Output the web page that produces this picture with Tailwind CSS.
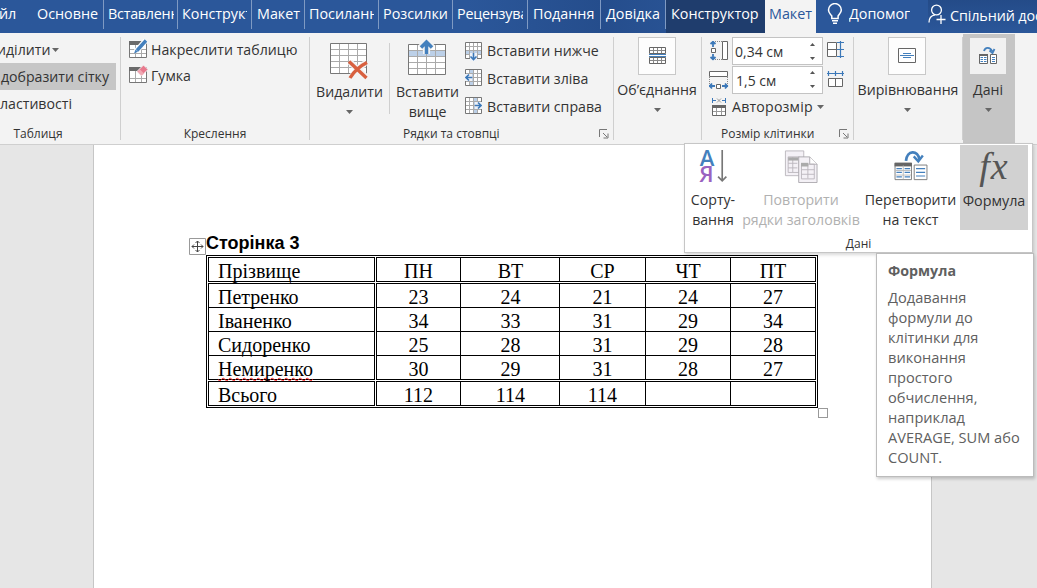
<!DOCTYPE html>
<html lang="uk">
<head>
<meta charset="utf-8">
<title>Word</title>
<script src="https://cdn.jsdelivr.net/npm/@tailwindcss/browser@4"></script>
</head>
<body class="relative w-[1037px] h-[588px] overflow-hidden bg-[#e6e6e6] font-['Open_Sans','Noto_Sans',sans-serif] text-[14.15px] leading-[20px] text-[#333] whitespace-nowrap">
<svg class="hidden">
  <symbol id="caret" viewBox="0 0 7 4"><path d="M0 0h7L3.500 4z" fill="#666"/></symbol>
  <symbol id="up" viewBox="0 0 5 3"><path d="M0 3h5L2.500 0z" fill="#555"/></symbol>
  <symbol id="down" viewBox="0 0 5 3"><path d="M0 0h5L2.500 3z" fill="#555"/></symbol>
  <symbol id="launch" viewBox="0 0 10 10"><path d="M.5 8V.5H8M4 4l4 4M9 4.500V9H4.500" fill="none" stroke="#777"/></symbol>
</svg>

<!-- Tabs -->
<nav class="flex h-[33px] bg-[#2b579a] bg-linear-to-r from-[#2b579a] from-45% via-[#254d8c] via-58% to-[#2b579a] to-70% text-white text-[14.35px] leading-[28px]">
  <div class="w-[32px] h-[29px] -ml-px">йл</div>
  <div class="w-[73px] h-[29px] pl-[6px] border-r border-[#7f9ac3]">Основне</div>
  <div class="w-[74px] h-[29px] pl-[4px] pr-[3px] border-r border-[#7f9ac3]"><div class="overflow-hidden tracking-[-0.25px]">Вставлення</div></div>
  <div class="w-[74px] h-[29px] pl-[4px] pr-[4px] border-r border-[#7f9ac3]"><div class="overflow-hidden">Конструктор</div></div>
  <div class="w-[53px] h-[29px] pl-[5px] border-r border-[#7f9ac3]">Макет</div>
  <div class="w-[74px] h-[29px] pl-[4px] pr-[4px] border-r border-[#7f9ac3]"><div class="overflow-hidden">Посилання</div></div>
  <div class="w-[74px] h-[29px] pl-[4px] border-r border-[#7f9ac3]">Розсилки</div>
  <div class="w-[75px] h-[29px] pl-[4px] pr-[4px] border-r border-[#7f9ac3]"><div class="overflow-hidden tracking-[-0.25px]">Рецензування</div></div>
  <div class="w-[73px] h-[29px] pl-[5px] border-r border-[#7f9ac3]">Подання</div>
  <div class="w-[65px] h-[29px] pl-[5px] border-r border-[#7f9ac3]">Довідка</div>
  <div class="w-[99px] h-[33px] pl-[5px] bg-[#1f3d6d]">Конструктор</div>
  <div class="w-[51px] h-[33px] pl-[4px] bg-[#f3f3f3] text-[#2b579a]">Макет</div>
  <div class="flex w-[112px] h-[33px] pl-[11px] bg-[#2b579a]">
    <svg class="w-[16px] h-[22px] mt-[3px] mr-[6px] shrink-0" viewBox="0 0 16 22" fill="none" stroke="#fff" stroke-width="1.500"><path d="M4.800 15.500v-2.500C3.500 11 1.500 10 1.500 7a6.300 6.300 0 0 1 12.800 0c0 3-2 4-3.200 6v2.500zM5 17.800h6M6 20.200h4"/></svg>
    <div class="w-[61px] overflow-hidden">Допомога</div>
  </div>
  <div class="flex flex-1 h-[33px] bg-linear-to-b from-[#244b88] to-[#2b579a] leading-[31px] overflow-hidden">
    <svg class="w-[18px] h-[20px] mt-[4px] mr-[4px] shrink-0" viewBox="0 0 18 20" fill="none" stroke="#fff" stroke-width="1.300"><circle cx="8.500" cy="6" r="4.900"/><path d="M1 18.500c0-4 2.500-7 6-7.600M13 11v9M8.500 15.500h9"/></svg>
    <div class="tracking-[-0.1px]">Спільний дос</div>
  </div>
</nav>

<!-- Ribbon -->
<section class="flex h-[112px] bg-[#f3f3f3] border-b border-[#cfcfcf]">
  <div class="flex flex-col w-[121px] h-[103px] mt-1 border-r border-[#cfcfcf]">
    <div class="flex items-center h-[26px] -ml-[3px]"><div class="w-[51px] text-right">иділити</div><svg class="w-[7px] h-1 ml-[4px]"><use href="#caret"/></svg></div>
    <div class="h-[27px] w-[116px] pr-[7px] bg-[#c6c6c6] text-right leading-[27px]">добразити сітку</div>
    <div class="h-[39px] w-[68px] text-right leading-[27px]">ластивості</div>
    <div class="w-[76px] text-center text-[12px] leading-[12px]">Таблиця</div>
  </div>

  <div class="flex flex-col w-[189px] h-[103px] mt-1 border-r border-[#cfcfcf]">
    <div class="flex items-center h-[26px] pl-2 gap-[3px]">
      <svg class="w-[19px] h-[19px] -mt-[2px]" viewBox="0 0 19 19"><path d="M.5 2.500h17v16H.5z" fill="#fff" stroke="#777"/><path d="M0 2h13v4H0z" fill="#6a6a6a"/><path d="M1 10.500h16M1 14.500h16M6.500 6v12M12.500 6v12" stroke="#aaa"/><path d="M7 12.500 17 1" stroke="#fff" stroke-width="5.500"/><path d="m8 11.500 9-10" stroke="#4480bd" stroke-width="3.400"/><path d="m5 14.500 1.500-4 2.500 2.300z" fill="#4480bd"/></svg>
      <div class="tracking-[0.03px]">Накреслити таблицю</div>
    </div>
    <div class="flex items-center h-[27px] pl-2 gap-[3px]">
      <svg class="w-[19px] h-[19px] -mt-[2px]" viewBox="0 0 19 19"><path d="M.5 2.500h17v15H.5z" fill="#fff" stroke="#777"/><path d="M0 2h12v4H0z" fill="#6a6a6a"/><path d="M1 13.500h16M6.500 6v11M12.500 6v11" stroke="#aaa"/><path d="M8 6.500 14.500 0 19 4.500 12.500 11z" stroke="#f3f3f3" fill="#e8798d"/><path d="m9 6.500 2-2 4 4-2.500 2z" fill="#f0a8b3"/></svg>
      <div>Гумка</div>
    </div>
    <div class="mt-[39px] text-center text-[12px] leading-[12px]">Креслення</div>
  </div>

  <div class="flex flex-col w-[304px] h-[103px] mt-1 border-r border-[#cfcfcf]">
    <div class="flex h-[92px]">
      <div class="flex flex-col items-center w-[79px]">
        <svg class="w-[40px] h-[39px] mt-[5px] mb-[1px] -ml-px" viewBox="0 0 40 39"><path d="M1.500 1.500h36v30h-36z" fill="#fff" stroke="#777"/><path d="M2 7.500h35M2 13.500h35M2 19.500h35M2 25.500h35M10.500 2v29M19.500 2v29M28.500 2v29" stroke="#aaa"/><path d="m21 20 16 15M37 20 21 36" stroke="#f3f3f3" stroke-width="6"/><path d="M20 19.500 37.500 36M38 20.500Q27 26 21 36" fill="none" stroke="#d8603f" stroke-width="3.400"/></svg>
        <div>Видалити</div>
        <svg class="w-[7px] h-1 mt-[8px]"><use href="#caret"/></svg>
      </div>
      <div class="w-px h-[71px] mt-[6px] bg-[#cfcfcf]"></div>
      <div class="flex flex-col items-center w-[75px] pt-[2px]">
        <svg class="w-[38px] h-[37px] mb-[6px] -ml-[2px]" viewBox="0 0 38 37"><path d="M.5 5.500h37v30H.5z" fill="#fff" stroke="#777"/><path d="M1 11h36v6H1z" fill="#bcd0e8"/><path d="M1 11.500h36M1 17.500h36M1 23.500h36M1 29.500h36M9.500 6v29M18.500 6v29M27.500 6v29" stroke="#aaa"/><path d="M18.500 15V3M12.500 9l6-6 6 6" fill="none" stroke="#f3f3f3" stroke-width="7"/><path d="M18.500 15V3M13 8.500l5.500-5.500L24 8.500" fill="none" stroke="#4480bd" stroke-width="3.500"/></svg>
        <div>Вставити</div>
        <div>вище</div>
      </div>
      <div class="flex flex-col">
        <div class="flex items-center h-[28px] gap-[5px]">
          <svg class="w-[17px] h-[19px]" viewBox="0 0 17 19"><path d="M.5.500h16v16H.5z" fill="#fff" stroke="#777"/><path d="M1 9h15v4H1z" fill="#bcd0e8"/><path d="M1 4.500h15M1 8.500h15M1 12.500h15M4.500 1v15M8.500 1v15M12.500 1v15" stroke="#aaa"/><path d="M5 11h7v8H5z" fill="#eef2f8"/><path d="M8.500 11v6.500M5.500 14.500l3 3 3-3" fill="none" stroke="#3c78b8" stroke-width="1.600"/></svg>
          <div>Вставити нижче</div>
        </div>
        <div class="flex items-center h-[28px] gap-[5px]">
          <svg class="w-[17px] h-[17px] -mt-[4px]" viewBox="0 0 17 17"><path d="M.5.500h16v16H.5z" fill="#fff" stroke="#777"/><path d="M5 1h4v15H5z" fill="#bcd0e8"/><path d="M1 4.500h15M1 8.500h15M1 12.500h15M4.500 1v15M8.500 1v15M12.500 1v15" stroke="#aaa"/><path d="M0 5h7v7H0z" fill="#eef2f8"/><path d="M7 8.500H1M4 5.500l-3 3 3 3" fill="none" stroke="#3c78b8" stroke-width="1.600"/></svg>
          <div>Вставити зліва</div>
        </div>
        <div class="flex items-center h-[28px] gap-[5px]">
          <svg class="w-[17px] h-[17px] -mt-[4px]" viewBox="0 0 17 17"><path d="M.5.500h16v16H.5z" fill="#fff" stroke="#777"/><path d="M9 1h4v15H9z" fill="#bcd0e8"/><path d="M1 4.500h15M1 8.500h15M1 12.500h15M4.500 1v15M8.500 1v15M12.500 1v15" stroke="#aaa"/><path d="M10 5h7v7h-7z" fill="#eef2f8"/><path d="M10 8.500h6M13 5.500l3 3-3 3" fill="none" stroke="#3c78b8" stroke-width="1.600"/></svg>
          <div>Вставити справа</div>
        </div>
      </div>
    </div>
    <div class="flex items-center text-[12px] leading-[12px] pl-[93px] pr-[4px] justify-between"><div>Рядки та стовпці</div><svg class="w-[10px] h-[10px]"><use href="#launch"/></svg></div>
  </div>

  <div class="flex flex-col items-center w-[88px] h-[103px] pr-px mt-1 border-r border-[#cfcfcf]">
    <div class="flex items-center justify-center w-[38px] h-[38px] border border-[#c8c8c8] bg-[#fdfdfd]">
      <svg class="w-[18px] h-[18px]" viewBox="0 0 18 18"><path d="M1.500.500h16v6h-16zM1.500 10.500h16v6h-16z" fill="#fff" stroke="#666"/><path d="M2 3.500h15M2 13.500h15M5.500 1v5M9.500 1v5M13.500 1v5M5.500 11v5M9.500 11v5M13.500 11v5" stroke="#888"/><path d="M1 7.500h17M1 9.500h17" stroke="#4480bd"/></svg>
    </div>
    <div class="mt-[5px]">Об’єднання</div>
    <svg class="w-[7px] h-1 mt-[8px]"><use href="#caret"/></svg>
  </div>

  <div class="flex flex-col w-[152px] h-[103px] mt-1 border-r border-[#cfcfcf]">
    <div class="flex h-[29px]">
      <svg class="w-[20px] h-[20px] ml-[7px] mt-[4px] mr-[3px]" viewBox="0 0 20 20" fill="none"><path d="M4 0v6M1.500 3 4 .8 6.500 3M4 19v-6M1.500 16 4 18.200 6.500 16" stroke="#3c78b8" stroke-width="1.800"/><path d="M2.500 7.500h4v4h-4zM13.500.500h5v18h-5z" fill="#fff" stroke="#666"/><path d="M6 .5h7M6 18.500h7" stroke="#888" stroke-dasharray="1 1"/></svg>
      <div class="flex items-center justify-between w-[91px] h-[28px] pl-[2px] pr-[7px] bg-white border border-[#c3c3c3] text-[14px]"><div class="pt-[2px]">0,34 см</div><div class="flex flex-col gap-[11px]"><svg class="w-[5px] h-[3px]"><use href="#up"/></svg><svg class="w-[5px] h-[3px]"><use href="#down"/></svg></div></div>
      <svg class="w-[18px] h-[18px] ml-[4px] mt-[4px]" viewBox="0 0 18 18" fill="none"><path d="M.5 1.500h9v14h-9zM.5 8.500h9" fill="#fff" stroke="#666"/><path d="M13.500 0v17M10 1.500h7M10 8.500h7M10 15.500h7" stroke="#3c78b8" stroke-width="1.200"/></svg>
    </div>
    <div class="flex h-[29px]">
      <svg class="w-[20px] h-[20px] ml-[7px] mt-[5px] mr-[3px]" viewBox="0 0 20 20" fill="none"><path d="M0 15h6M3 12.500.8 15 3 17.500M19 15h-6M16 12.500l2.200 2.500-2.200 2.500" stroke="#3c78b8" stroke-width="1.800"/><path d="M7.500 13.500h4v4h-4zM.5.500h18v5H.5z" fill="#fff" stroke="#666"/><path d="M.5 6v7M18.500 6v7" stroke="#888" stroke-dasharray="1 1"/></svg>
      <div class="flex items-center justify-between w-[91px] h-[28px] pl-[3px] pr-[7px] bg-white border border-[#c3c3c3] text-[14px]"><div class="pt-[2px]">1,5 см</div><div class="flex flex-col gap-[11px]"><svg class="w-[5px] h-[3px]"><use href="#up"/></svg><svg class="w-[5px] h-[3px]"><use href="#down"/></svg></div></div>
      <svg class="w-[18px] h-[18px] ml-[4px] mt-[5px]" viewBox="0 0 18 18" fill="none"><path d="M1.500 7.500h14v8h-14zM8.500 7.500v8" fill="#fff" stroke="#666"/><path d="M0 2.500h17M1.500 0v5M8.500 0v5M15.500 0v5" stroke="#3c78b8" stroke-width="1.200"/></svg>
    </div>
    <div class="flex items-center h-[26px] mb-[8px]">
      <svg class="w-[15px] h-[18px] -mt-px ml-[9px] mr-[6px]" viewBox="0 0 15 18" fill="none"><path d="M1.500 0v5M14.500 0v5M2 2.500h3M11 2.500h3" stroke="#3c78b8"/><path d="m6 .5 4 4M10 .5l-4 4" stroke="#888" stroke-width=".8"/><path d="M1.500 7.500h13v10h-13z" fill="#fff" stroke="#666"/><path d="M1 7h14v3H1z" fill="#666"/><path d="M2 13.500h12M5.500 10v7M10.500 10v7" stroke="#999"/></svg>
      <div class="tracking-[0.2px]">Авторозмір</div><svg class="w-[7px] h-1 ml-[4px]"><use href="#caret"/></svg>
    </div>
    <div class="flex items-center text-[12px] leading-[12px] pl-[19px] pr-[4px] justify-between"><div>Розмір клітинки</div><svg class="w-[10px] h-[10px]"><use href="#launch"/></svg></div>
  </div>

  <div class="flex flex-col items-center w-[109px] h-[103px] pr-[2px] mt-1 border-r border-[#cfcfcf]">
    <div class="flex items-center justify-center w-[38px] h-[38px] border border-[#c8c8c8] bg-[#fdfdfd]">
      <svg class="w-[18px] h-[16px]" viewBox="0 0 18 16"><path d="M.5.500h17v14H.5z" fill="#fff" stroke="#666"/><path d="M5 5.500h8M2 7.500h14M5 9.500h8" stroke="#4480bd"/></svg>
    </div>
    <div class="mt-[5px] ml-[2px]">Вирівнювання</div>
    <svg class="w-[7px] h-1 mt-[8px]"><use href="#caret"/></svg>
  </div>

  <div class="flex flex-col items-center w-[52px] h-[110px] mt-px pt-[4px] pr-[2px] bg-[#c5c5c5]">
    <div class="flex items-center justify-center w-[36px] h-[36px] bg-[#f1f1f1]">
      <svg class="w-[20px] h-[20px]" viewBox="0 0 20 20"><path d="M6 5c1-4 6-4.500 8 0M11.500 4.500l3 2.500L16.500 3" fill="none" stroke="#4480bd" stroke-width="1.800"/><path d="M1.500 8.500h8v9h-8zM12.500 8.500h6v9h-6z" fill="#fff" stroke="#666"/><path d="M1 9h9" stroke="#666" stroke-width="2"/><path d="M2.500 11.500H5M6 11.500h2.500M2.500 13.500H5M6 13.500h2.500M2.500 15.500H5M6 15.500h2.500M14 11.500h3M14 13.500h3M14 15.500h3" stroke="#4480bd"/></svg>
    </div>
    <div class="mt-[6px]">Дані</div>
    <svg class="w-[7px] h-1 mt-[8px]"><use href="#caret"/></svg>
  </div>
</section>

<!-- Page -->
<main class="w-[839px] h-[443px] ml-[93px] pt-[87px] bg-white border-x border-[#c6c6c6] font-['Liberation_Serif',serif] text-black">
  <div class="flex items-end h-[23px] ml-[95px]">
    <svg class="w-[17px] h-[17px]" viewBox="0 0 17 17"><path d="M.5.500h16v16H.5z" fill="#fff" stroke="#999"/><path d="M8.500 3v11M3 8.500h11M6.500 5l2-2 2 2M6.500 12l2 2 2-2M5 6.500l-2 2 2 2M12 6.500l2 2-2 2" fill="none" stroke="#444"/></svg>
    <h1 class="font-['Liberation_Sans',sans-serif] font-bold text-[18px] leading-[22px] mb-[1px]">Сторінка 3</h1>
  </div>
  <div class="grid grid-cols-[167px_440px] gap-px p-px w-[612px] ml-[112px] border border-black text-[20px] leading-[27px]">
    <div class="h-[25px] border border-black pl-[9px]">Прізвище</div>
    <div class="grid grid-cols-[84px_99px_86px_85px_84px] grid-rows-[23px] h-[25px] border border-black text-center divide-x divide-black"><div>ПН</div><div class="pl-px">ВТ</div><div>СР</div><div>ЧТ</div><div>ПТ</div></div>
    <div class="grid grid-rows-[24px_24px_24px_23px] h-[97px] border border-black divide-y divide-black">
      <div class="pl-[9px]">Петренко</div><div class="pl-[9px]">Іваненко</div><div class="pl-[9px]">Сидоренко</div><div class="pl-[9px]"><span class="underline decoration-wavy decoration-[#ff2020] decoration-[1.2px] underline-offset-[1px] [text-decoration-skip-ink:none]">Немиренко</span></div>
    </div>
    <div class="grid grid-rows-[24px_24px_24px_23px] h-[97px] border border-black divide-y divide-black text-center">
      <div class="grid grid-cols-[84px_99px_86px_85px_84px] grid-rows-[23px] divide-x divide-black"><div>23</div><div class="pl-px">24</div><div>21</div><div>24</div><div>27</div></div>
      <div class="grid grid-cols-[84px_99px_86px_85px_84px] grid-rows-[23px] divide-x divide-black"><div>34</div><div class="pl-px">33</div><div>31</div><div>29</div><div>34</div></div>
      <div class="grid grid-cols-[84px_99px_86px_85px_84px] grid-rows-[23px] divide-x divide-black"><div>25</div><div class="pl-px">28</div><div>31</div><div>29</div><div>28</div></div>
      <div class="grid grid-cols-[84px_99px_86px_85px_84px] grid-rows-[23px] divide-x divide-black"><div>30</div><div class="pl-px">29</div><div>31</div><div>28</div><div>27</div></div>
    </div>
    <div class="h-[25px] border border-black pl-[9px]">Всього</div>
    <div class="grid grid-cols-[84px_99px_86px_85px_84px] grid-rows-[23px] h-[25px] border border-black text-center divide-x divide-black"><div>112</div><div class="pl-px">114</div><div>114</div><div></div><div></div></div>
  </div>
  <div class="w-[10px] h-[10px] ml-[724px] border border-[#999]"></div>
</main>

<!-- Data group flyout -->
<section class="absolute left-[684px] top-[143px] w-[349px] h-[110px] bg-white border border-[#c6c6c6] shadow-[1px_2px_3px_rgba(0,0,0,0.15)] text-center">
  <div class="flex pt-px h-[86px]">
    <div class="flex flex-col items-center w-[56px]">
      <svg class="w-[34px] h-[38px] mt-[4px] mb-[6px]" viewBox="0 0 34 38"><g font-family="Open Sans" font-weight="600" font-size="24" text-anchor="middle"><text x="10.500" y="18" fill="#4480bd">А</text><text x="10" y="36" fill="#9a62c0">Я</text></g><path d="M27 1v33M22.500 30l4.500 4.500L31.500 30" fill="none" stroke="#777" stroke-width="1.800"/></svg>
      <div>Сорту-</div><div>вання</div>
    </div>
    <div class="flex flex-col items-center w-[120px] text-[#b1b1b1]">
      <svg class="w-[36px] h-[36px] mt-[5px] mb-[7px]" viewBox="0 0 36 36"><path d="M1 1h20v27H1z" fill="#f4f1f6" stroke="#bab6bc"/><path d="M4 7.500h12v17H4zM4 14.500h10M4 19.500h10M9 8v16" fill="none" stroke="#bab6bc"/><path d="M4 8h11v3.500H4z" fill="#aaa"/><path d="M15.500 7.500h12l8 8v20h-20z" fill="#f4f1f6" stroke="#aaa6ac"/><path d="M27.500 7.500v8h8" fill="#fff" stroke="#aaa6ac"/><path d="M18.500 15.500h14v16h-14zM18.500 21.500h14M18.500 26.500h14M25.500 16v15" fill="none" stroke="#bab6bc"/><path d="M18 14h8v4h-8z" fill="#aaa"/></svg>
      <div>Повторити</div><div>рядки заголовків</div>
    </div>
    <div class="flex flex-col items-center w-[99px]">
      <svg class="w-[36px] h-[34px] mt-[5px] mb-[9px]" viewBox="0 0 36 34"><path d="M12.500 12c1-12 13-13 15-1" fill="none" stroke="#4480bd" stroke-width="3"/><path d="M21 7 26 12.500 31 6" fill="none" stroke="#4480bd" stroke-width="2.600"/><path d="M.5 14.500h18v18H.5zM21.500 16.500h14v16h-14z" fill="#fff" stroke="#777"/><path d="M0 14h19v4H0z" fill="#666"/><path d="M9.500 17v15M1 22.500h17M1 27.500h17" stroke="#bbb"/><path d="M2 20.500h6M2 24.500h6M2 29.500h6M11 20.500h6M11 24.500h6M11 29.500h6M23.500 20.500h10M23.500 24.500h10M23.500 28.500h10" stroke="#4480bd" stroke-width="1.300"/></svg>
      <div>Перетворити</div><div>на текст</div>
    </div>
    <div class="flex flex-col items-center w-[68px] h-[85px] bg-[#d1d1d1]">
      <div class="h-[46px] font-['Liberation_Serif',serif] italic text-[38px] leading-[42px] text-[#555] tracking-[1px]">fx</div>
      <div class="text-[14.350px]">Формула</div>
    </div>
  </div>
  <div class="text-[12px] leading-[28px]">Дані</div>
</section>

<!-- Tooltip -->
<aside class="absolute left-[876px] top-[253px] w-[158px] h-[224px] pl-[11px] pt-[7px] bg-white border border-[#bcbcbc] shadow-[1px_2px_3px_rgba(0,0,0,0.2)] text-[14.600px] leading-[20px] text-[#606060]">
  <div class="mb-[6px] font-bold text-[14.250px]">Формула</div>
  <p>Додавання<br>формули до<br>клітинки для<br>виконання<br>простого<br>обчислення,<br>наприклад<br>AVERAGE, SUM або<br>COUNT.</p>
</aside>
</body>
</html>
